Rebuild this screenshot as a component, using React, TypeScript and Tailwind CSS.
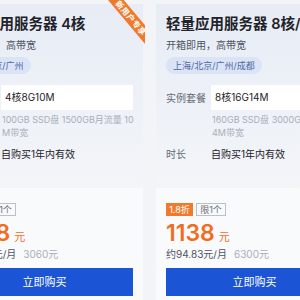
import React from "react";

type CardProps = {
  title: string;
  cities: string;
  plan: string;
  spec: string;
  discount: string;
  price: string;
  monthly: string;
  original: string;
  ribbon?: boolean;
};

function Card(p: CardProps) {
  return (
    <div className="relative flex w-[197px] shrink-0 flex-col">
      <div className="flex h-[184px] flex-col bg-gradient-to-b from-[#e7ecf5] to-[#f3f5f9] px-[10px] pt-[10px]">
        <div className="whitespace-nowrap text-[14.5px] font-semibold leading-[20px] text-[#1f2329]">
          {p.title}
        </div>
        <div className="mt-[4px] whitespace-nowrap text-[10px] leading-[14px] text-[#4e5563]">
          开箱即用，高带宽
        </div>
        <div className="mt-[5px] flex">
          <span className="flex h-[17px] items-center whitespace-nowrap rounded-full bg-[#dbe4f6] px-[7px] text-[9px] text-[#4d6aa6]">
            {p.cities}
          </span>
        </div>
        <div className="mt-[11px] flex items-center">
          <div className="w-[45px] shrink-0 text-[10px] leading-[14px] text-[#666b75]">实例套餐</div>
          <div className="flex h-[25px] flex-1 items-center whitespace-nowrap bg-white pl-[4px] text-[10px] text-[#1f2329]">
            {p.plan}
          </div>
        </div>
        <div className="ml-[45px] mt-[3px] w-[134px] break-all pl-[1px] text-[9px] leading-[13px] text-[#a9aeb8]">
          {p.spec}
        </div>
        <div className="mt-[8px] flex items-center">
          <div className="w-[45px] shrink-0 text-[10px] leading-[14px] text-[#666b75]">时长</div>
          <div className="whitespace-nowrap text-[10px] leading-[14px] text-[#1f2329]">自购买1年内有效</div>
        </div>
      </div>
      <div className="flex h-[120px] flex-col bg-[#f9fafc] px-[10px] pt-[15px]">
        <div className="flex gap-[3px]">
          <span className="flex h-[13px] w-[27px] items-center justify-center bg-[#f07a2c] text-[9px] text-white">
            {p.discount}
          </span>
          <span className="flex h-[13px] w-[30px] items-center justify-center border border-[#b9c0cc] text-[9px] text-[#666b75]">
            限1个
          </span>
        </div>
        <div className="mt-[4px] flex items-baseline gap-[4px] text-[#f26c1e]">
          <span className="text-[23px] font-semibold leading-[26px]">{p.price}</span>
          <span className="text-[11px]">元</span>
        </div>
        <div className="mt-[1px] flex items-center gap-[7px] whitespace-nowrap text-[10px] leading-[14px]">
          <span className="text-[#4e5563]">{p.monthly}</span>
          <span className="text-[#a9aeb8]">{p.original}</span>
        </div>
        <div className="mt-[7px] flex h-[28px] items-center justify-center bg-[#1b55d6] text-[11px] text-white">
          立即购买
        </div>
      </div>
      {p.ribbon && (
        <div className="absolute right-[-2px] top-[-4px] h-[50px] w-[50px] overflow-hidden">
          <div className="absolute left-[1px] top-[12px] flex h-[12px] w-[70px] rotate-[50deg] items-center justify-center bg-[#f07a2b] text-[8px] font-semibold tracking-[0.5px] text-white">
            新用户专享
          </div>
        </div>
      )}
    </div>
  );
}

export default function App() {
  return (
    <div className="relative h-[300px] w-[300px] overflow-hidden bg-[#f3f4f7] font-['Inter','Noto_Sans_CJK_SC',sans-serif]">
      <div className="ml-[-54px] flex gap-[13px] pt-[4px]">
        <Card
          title="轻量应用服务器 4核"
          cities="上海/北京/广州"
          plan="4核8G10M"
          spec="100GB SSD盘 1500GB月流量 10M带宽"
          discount="2.5折"
          price="1088"
          monthly="约90.67元/月"
          original="3060元"
          ribbon
        />
        <Card
          title="轻量应用服务器 8核/16G"
          cities="上海/北京/广州/成都"
          plan="8核16G14M"
          spec="160GB SSD盘 3000GB月流量 14M带宽"
          discount="1.8折"
          price="1138"
          monthly="约94.83元/月"
          original="6300元"
        />
      </div>
    </div>
  );
}
